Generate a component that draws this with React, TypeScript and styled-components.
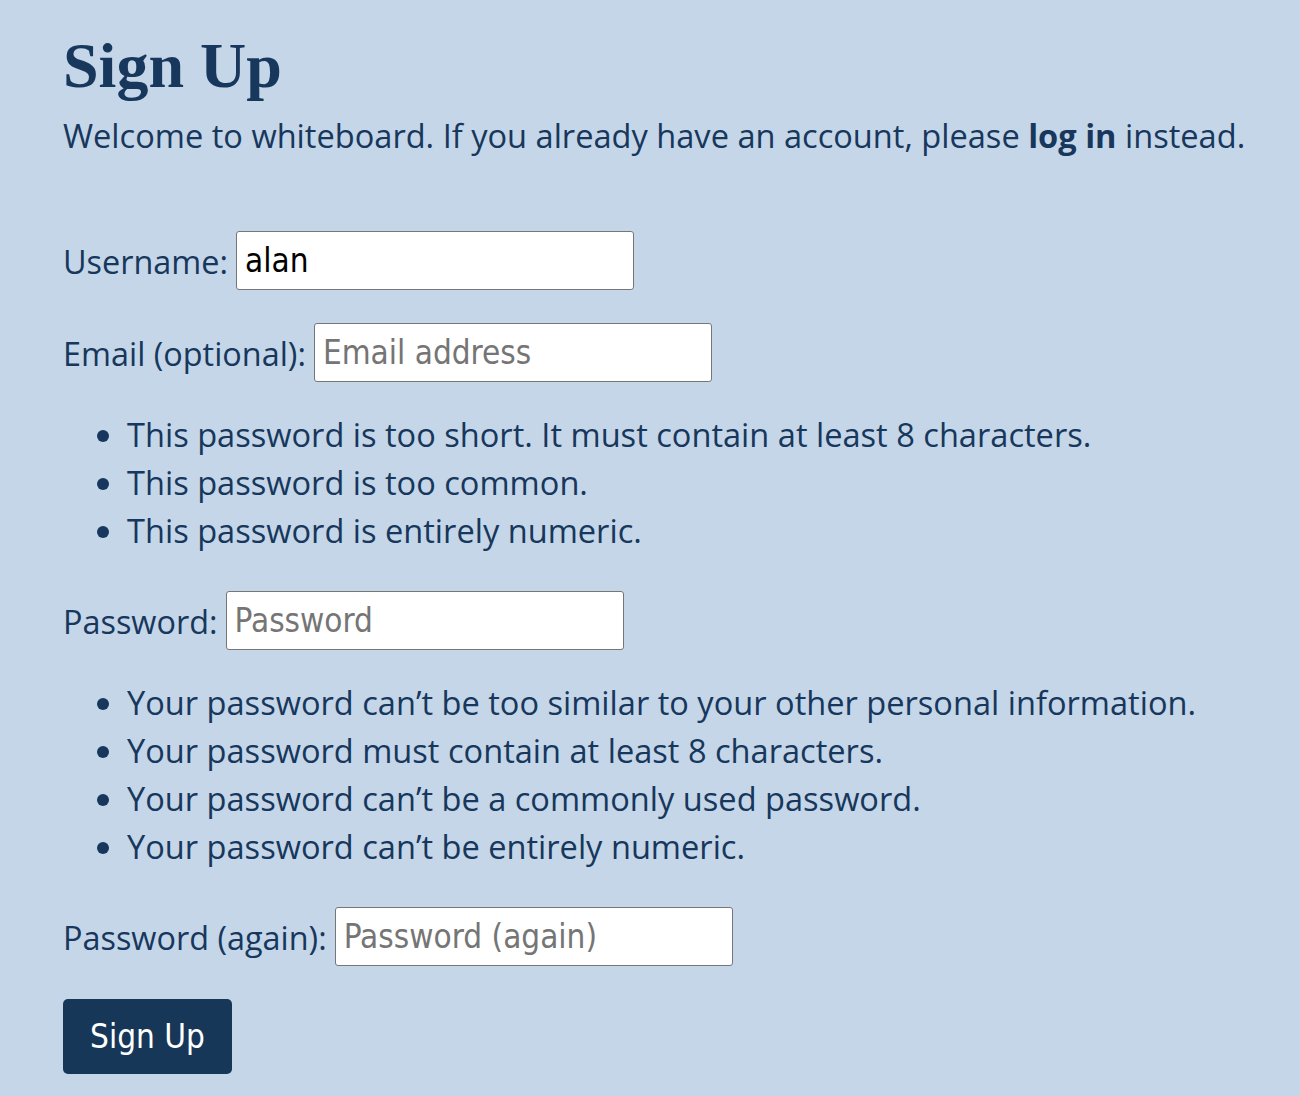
import React from "react";
import styled, { createGlobalStyle } from "styled-components";

const Global = createGlobalStyle`
  html, body { margin: 0; padding: 0; background: #c4d6e8; }
  body { font-family: "Open Sans", "Noto Sans", sans-serif; color: #17375c; }
`;

const Page = styled.main`
  padding: 28px 16px 20px 63px;
  display: flex;
  flex-direction: column;
`;

const Title = styled.h1`
  font-family: "Liberation Serif", "DejaVu Serif", serif;
  font-weight: 700;
  font-size: 64px;
  line-height: 76px;
  margin: 0;
  color: #17375c;
`;

const Intro = styled.p`
  font-size: 32.6px;
  line-height: 44px;
  margin: 10px 0 73px 0;
  white-space: nowrap;
  b { font-weight: 700; }
`;

const Form = styled.form`
  display: flex;
  flex-direction: column;
  align-items: flex-start;
`;

const Row = styled.div<{ $mb?: number }>`
  display: flex;
  align-items: center;
  gap: 8px;
  margin-bottom: ${(p) => p.$mb ?? 0}px;
`;

const Label = styled.label`
  font-size: 32.4px;
`;

const Input = styled.input`
  box-sizing: border-box;
  width: 398px;
  height: 59px;
  border: 1.5px solid #767676;
  border-radius: 3px;
  background: #fff;
  font-family: "DejaVu Sans Condensed", "Liberation Sans", sans-serif;
  font-size: 33px;
  padding: 0 8px;
  color: #000;
  &::placeholder { color: #757575; }
`;

const Errors = styled.ul<{ $mt: number; $mb: number }>`
  margin: ${(p) => `${p.$mt}px 0 ${p.$mb}px 0`};
  padding-left: 64px;
  font-size: 32.6px;
  line-height: 48px;
`;

const Button = styled.button`
  margin-top: 33px;
  width: 169px;
  height: 75px;
  border: none;
  border-radius: 5px;
  background: #173759;
  color: #fff;
  font-family: "DejaVu Sans Condensed", sans-serif;
  font-size: 33px;
`;

export default function App() {
  return (
    <>
      <Global />
      <Page>
        <Title>Sign Up</Title>
        <Intro>
          Welcome to whiteboard. If you already have an account, please <b>log in</b> instead.
        </Intro>
        <Form onSubmit={(e) => e.preventDefault()}>
          <Row $mb={33}>
            <Label>Username:</Label>
            <Input defaultValue="alan" />
          </Row>
          <Row>
            <Label>Email (optional):</Label>
            <Input placeholder="Email address" />
          </Row>
          <Errors $mt={29} $mb={36}>
            <li>This password is too short. It must contain at least 8 characters.</li>
            <li>This password is too common.</li>
            <li>This password is entirely numeric.</li>
          </Errors>
          <Row>
            <Label>Password:</Label>
            <Input type="password" placeholder="Password" />
          </Row>
          <Errors $mt={29} $mb={36}>
            <li>Your password can’t be too similar to your other personal information.</li>
            <li>Your password must contain at least 8 characters.</li>
            <li>Your password can’t be a commonly used password.</li>
            <li>Your password can’t be entirely numeric.</li>
          </Errors>
          <Row>
            <Label>Password (again):</Label>
            <Input type="password" placeholder="Password (again)" />
          </Row>
          <Button type="submit">Sign Up</Button>
        </Form>
      </Page>
    </>
  );
}
